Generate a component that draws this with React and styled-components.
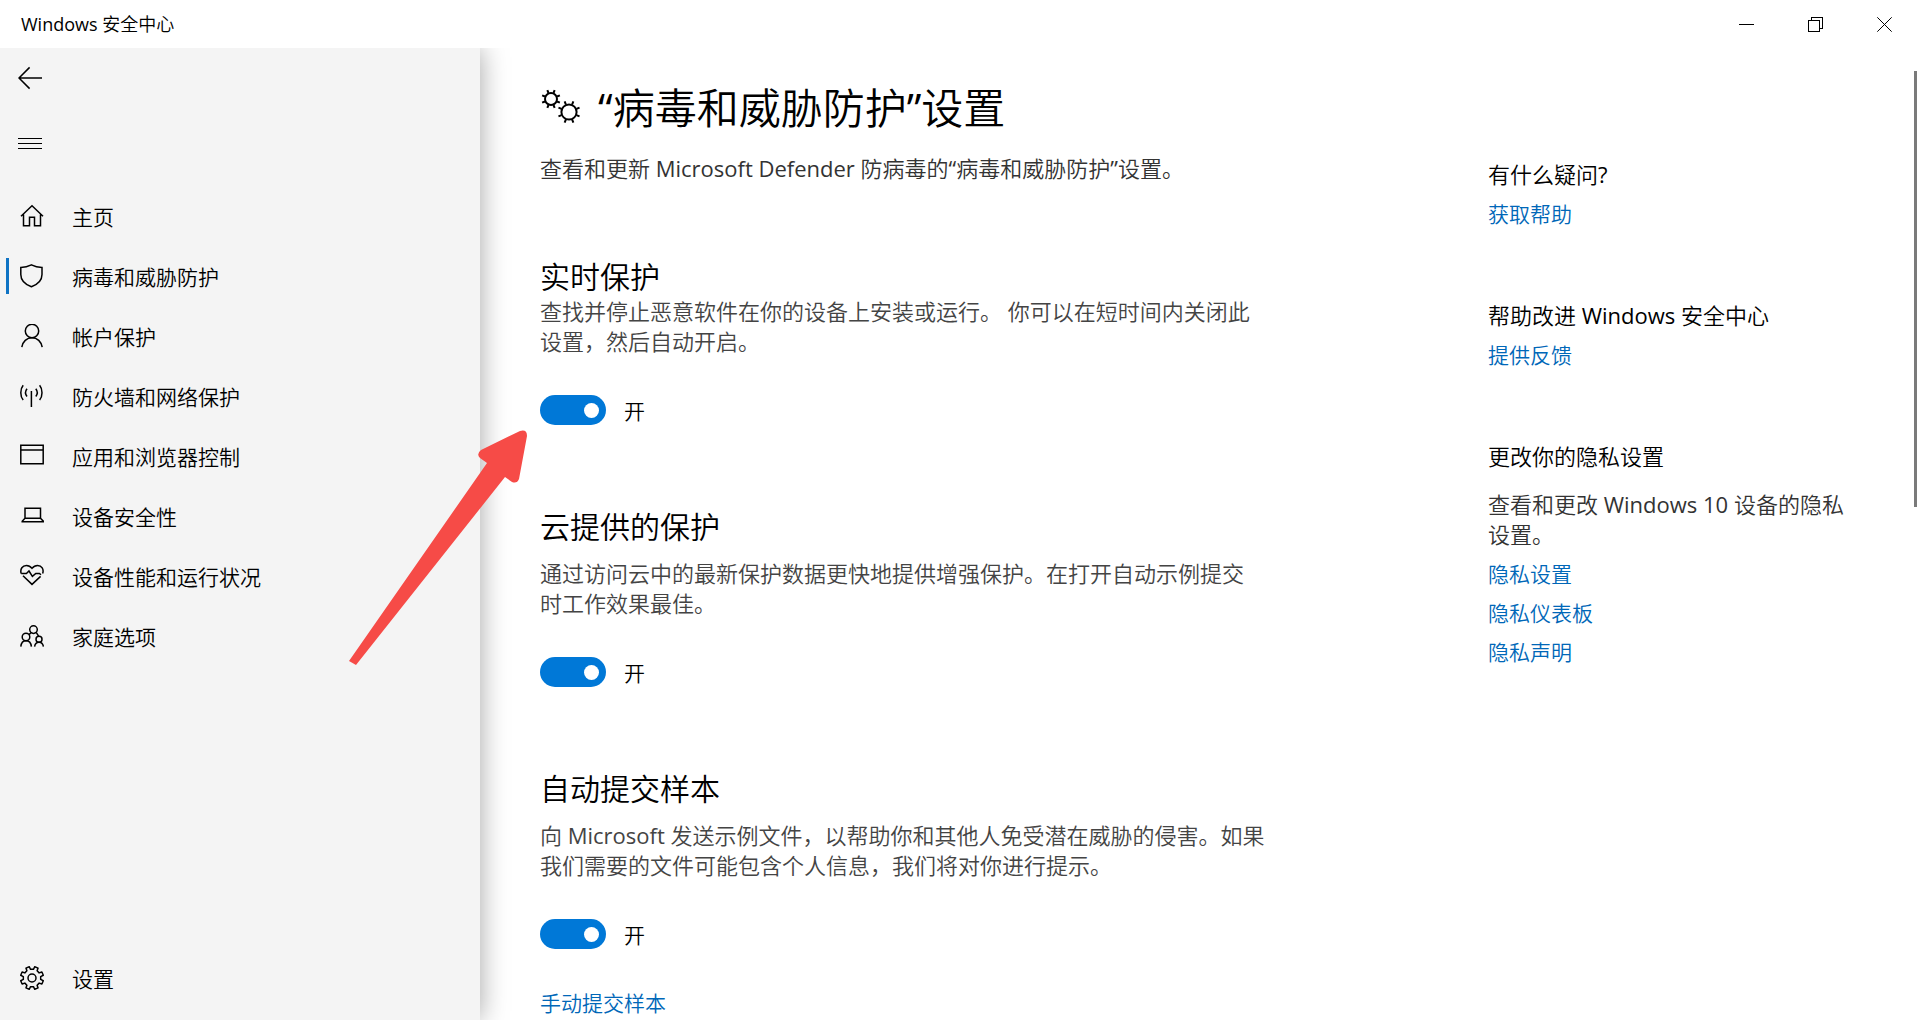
import React, { useState } from 'react';
import styled, { createGlobalStyle } from 'styled-components';

const GlobalStyle = createGlobalStyle`
  * {
    box-sizing: border-box;
  }

  body {
    margin: 0;
    background: #ffffff;
    color: #000000;
    font-family: 'Open Sans', 'Noto Sans CJK SC DemiLight', 'Noto Sans CJK SC', sans-serif;
    font-size: 21px;
    font-weight: 400;
  }

  h1, h2, h3, p {
    margin: 0;
    font-weight: inherit;
  }

  button {
    padding: 0;
    border: none;
    background: transparent;
    color: inherit;
    font: inherit;
    cursor: pointer;
  }
`;

const Window = styled.div`
  position: relative;
  display: flex;
  flex-direction: column;
  height: 100vh;
  overflow: hidden;
`;

const TitleBar = styled.header`
  position: relative;
  z-index: 2;
  display: flex;
  align-items: center;
  justify-content: space-between;
  flex: none;
  height: 48px;
  padding: 0 1px 0 21px;
  background: #ffffff;
`;

const WindowTitle = styled.span`
  padding-bottom: 2px;
  font-size: 18px;
`;

const WindowControls = styled.div`
  display: flex;
  height: 100%;
`;

const WindowButton = styled.button`
  display: flex;
  align-items: center;
  justify-content: center;
  width: 69px;
  height: 100%;

  &:hover {
    background: #e5e5e5;
  }
`;

const Body = styled.div`
  display: flex;
  flex: 1;
  min-height: 0;
`;

const Sidebar = styled.aside`
  z-index: 1;
  display: flex;
  flex-direction: column;
  flex: none;
  width: 480px;
  padding-bottom: 12px;
  background: #f4f4f4;
  box-shadow: 0 0 26px rgba(0, 0, 0, 0.36);
`;

const SidebarButton = styled.button`
  display: flex;
  align-items: center;
  width: 60px;
  height: 60px;
  padding-left: 18px;
`;

const SidebarTools = styled.div`
  display: flex;
  flex-direction: column;
  gap: 5px;
  padding-bottom: 13px;
`;

const Nav = styled.nav`
  display: flex;
  flex-direction: column;
  flex: 1;
`;

const NavItem = styled.a`
  position: relative;
  display: flex;
  align-items: center;
  gap: 28px;
  height: 60px;
  padding-left: 20px;
  color: #000000;
  text-decoration: none;

  &:last-child {
    margin-top: auto;
  }

  &:hover {
    background: #e6e6e6;
  }

  &::before {
    content: '';
    position: absolute;
    left: 6px;
    top: 12px;
    width: 3px;
    height: 36px;
    background: ${props => props.$active ? '#0f73c4' : 'transparent'};
  }
`;

const Main = styled.main`
  display: flex;
  flex: 1;
  gap: 208px;
  min-width: 0;
  padding: 0 40px 0 60px;
`;

const Content = styled.div`
  flex: 1;
  padding-top: 30px;
`;

const PageHeading = styled.div`
  display: flex;
  align-items: center;
  gap: 16px;
  height: 60px;
`;

const PageTitle = styled.h1`
  font-size: 42px;
  line-height: 60px;
`;

const Lead = styled.p`
  margin-top: 15px;
  color: #333333;
  font-size: 22px;
  line-height: 30px;
`;

const Section = styled.section`
  height: 262px;
`;

const Sections = styled.div`
  padding-top: 63px;
`;

const SectionTitle = styled.h2`
  height: 50px;
  padding-top: ${props => props.$tight ? '12px' : '0'};
  font-size: 30px;
  line-height: 38px;
`;

const SectionText = styled.p`
  max-width: 725px;
  color: #444444;
  font-size: 22px;
  line-height: 30px;
`;

const ToggleLabel = styled.label`
  display: flex;
  align-items: center;
  gap: 18px;
  width: max-content;
  height: 30px;
  margin-top: 39px;
  cursor: pointer;
`;

const Toggle = styled.input`
  appearance: none;
  display: flex;
  align-items: center;
  justify-content: flex-end;
  width: 66px;
  height: 30px;
  margin: 0;
  padding: 0 7px;
  border-radius: 15px;
  background: #0078d7;
  cursor: pointer;

  &::before {
    content: '';
    width: 15px;
    height: 15px;
    border-radius: 50%;
    background: #ffffff;
  }

  &:not(:checked) {
    justify-content: flex-start;
    background: #999999;
  }
`;

const TextLink = styled.a`
  display: block;
  color: #0067b8;
  line-height: 39px;
  text-decoration: none;

  &:hover {
    color: #666666;
  }
`;

const SectionLink = styled(TextLink)`
  margin-top: 35px;
`;

const Help = styled.div`
  display: flex;
  flex-direction: column;
  gap: 60px;
  flex: none;
  width: 392px;
  padding-top: 105px;
`;

const HelpTitle = styled.h3`
  font-size: 22px;
  line-height: 42px;
`;

const HelpText = styled.p`
  max-width: 366px;
  margin: 12px 0 6px;
  color: #333333;
  font-size: 22px;
  line-height: 30px;
`;

const Scrollbar = styled.div`
  position: absolute;
  top: 71px;
  right: 3px;
  width: 3px;
  height: 436px;
  background: #7a7a7a;
`;

const Pointer = styled.svg`
  position: absolute;
  top: 430px;
  left: 349px;
  z-index: 3;
  pointer-events: none;
`;

const Icon = ({ children, size = 24 }) => (
  <svg
    width={size}
    height={size}
    viewBox={`0 0 ${size} ${size}`}
    fill="none"
    stroke="currentColor"
    strokeWidth="1.5"
    aria-hidden="true"
  >
    {children}
  </svg>
);

// Closed outline of a cog with eight teeth
const cogPath = (cx, cy, outer, inner) => {
  const points = [];
  for (let i = 0; i < 8; i++) {
    const mid = 22.5 + i * 45;
    [[-13, inner], [-9, outer], [9, outer], [13, inner]].forEach(([offset, r]) => {
      const a = ((mid + offset) * Math.PI) / 180;
      points.push(`${(cx + r * Math.cos(a)).toFixed(2)} ${(cy + r * Math.sin(a)).toFixed(2)}`);
    });
  }
  return `M${points.join('L')}Z`;
};

// Short spokes around a ring
const spokesPath = (cx, cy, from, to) => {
  let d = '';
  for (let i = 0; i < 8; i++) {
    const a = ((22.5 + i * 45) * Math.PI) / 180;
    d += `M${cx + from * Math.cos(a)} ${cy + from * Math.sin(a)}L${cx + to * Math.cos(a)} ${cy + to * Math.sin(a)}`;
  }
  return d;
};

const icons = {
  home: <path d="M1 12.3 12 1.8 23 12.3M3.5 10.5V21.8H9.5V13.3H14.5V21.8H20.5V10.5" />,
  shield: <path d="M.8 3.4C4 3.4 8.5 2.4 11.4.9 14.3 2.4 18.8 3.4 22 3.4V10.5C22 16 18 20.3 11.4 22.8 4.8 20.3.8 16 .8 10.5Z" />,
  account: (
    <>
      <circle cx="12" cy="7" r="6.7" />
      <path d="M1.8 23.2C2.6 17.6 6.8 13.7 12 13.7S21.4 17.6 22.2 23.2" />
    </>
  ),
  network: (
    <path d="M11.4 7V23M3.2 1.2C0 5 0 12.3 3.2 16M7 4.8C5 7.4 5 10 7 12.5M19.6 1.2C22.8 5 22.8 12.3 19.6 16M15.8 4.8C17.8 7.4 17.8 10 15.8 12.5" />
  ),
  app: <path d="M.8 1.2H23.2V19.8H.8ZM.8 6H23.2" />,
  device: <path d="M5 4.2H20.5V14.2H5ZM5 14.2 2.2 17.2V17.8H23.3V17.2L20.5 14.2" />,
  health: (
    <>
      <path d="M1.2 9.6C-.2 5 2.6 1.4 6.4 1.4 8.8 1.4 10.6 2.6 12 4.4 13.4 2.6 15.2 1.4 17.6 1.4 21.6 1.4 24.2 5.2 22.6 9.6" />
      <path d="M1.2 9.6H6.4L9 7 12.4 12.4 15.8 9.4H19.4L21 10.8M3 11.8 12 20.4 20.6 12.4" />
    </>
  ),
  family: (
    <>
      <circle cx="13.5" cy="5.6" r="3.8" />
      <circle cx="6" cy="13" r="3.8" />
      <circle cx="19" cy="15.2" r="3" />
      <path d="M.8 22.6C1.2 19 3.2 16.8 6 16.8S11 19 11.4 22.6M14.6 22.6C15 20 16.6 18.2 19 18.2S23 20 23.4 22.6M9 10.6 11 8.8M16.2 8.4 18.6 12.2" />
    </>
  ),
  settings: (
    <>
      <path d={cogPath(12, 12, 11.6, 8.8)} strokeLinejoin="round" />
      <circle cx="12" cy="12" r="4" />
    </>
  )
};

const navItems = [
  { key: 'home', label: '主页' },
  { key: 'shield', label: '病毒和威胁防护' },
  { key: 'account', label: '帐户保护' },
  { key: 'network', label: '防火墙和网络保护' },
  { key: 'app', label: '应用和浏览器控制' },
  { key: 'device', label: '设备安全性' },
  { key: 'health', label: '设备性能和运行状况' },
  { key: 'family', label: '家庭选项' },
  { key: 'settings', label: '设置' }
];

const sections = [
  {
    key: 'realtime',
    title: '实时保护',
    text: '查找并停止恶意软件在你的设备上安装或运行。 你可以在短时间内关闭此设置，然后自动开启。'
  },
  {
    key: 'cloud',
    title: '云提供的保护',
    text: '通过访问云中的最新保护数据更快地提供增强保护。在打开自动示例提交时工作效果最佳。'
  },
  {
    key: 'samples',
    title: '自动提交样本',
    text: '向 Microsoft 发送示例文件，以帮助你和其他人免受潜在威胁的侵害。如果我们需要的文件可能包含个人信息，我们将对你进行提示。'
  }
];

const App = () => {
  const [selected, setSelected] = useState('shield');
  const [enabled, setEnabled] = useState({ realtime: true, cloud: true, samples: true });

  const toggle = (key) => setEnabled({ ...enabled, [key]: !enabled[key] });

  return (
    <Window lang="zh-CN">
      <GlobalStyle />
      <TitleBar>
        <WindowTitle>Windows 安全中心</WindowTitle>
        <WindowControls>
          <WindowButton aria-label="最小化">
            <svg width="15" height="15" stroke="#000000" shapeRendering="crispEdges">
              <path d="M0 7.5H15" />
            </svg>
          </WindowButton>
          <WindowButton aria-label="还原">
            <svg width="15" height="15" fill="none" stroke="#000000" shapeRendering="crispEdges">
              <path d="M.5 3.5H11.5V14.5H.5ZM3.5 3.5V.5H14.5V11.5H11.5" />
            </svg>
          </WindowButton>
          <WindowButton aria-label="关闭">
            <svg width="15" height="15" stroke="#000000">
              <path d="M.3.3 14.7 14.7M14.7.3.3 14.7" />
            </svg>
          </WindowButton>
        </WindowControls>
      </TitleBar>

      <Body>
        <Sidebar>
          <SidebarTools>
            <SidebarButton aria-label="返回">
              <Icon><path d="M24 12H1M11.6 1.4 1 12 11.6 22.6" /></Icon>
            </SidebarButton>
            <SidebarButton aria-label="打开导航">
              <svg width="24" height="24" stroke="#000000" shapeRendering="crispEdges">
                <path d="M0 7.5H24M0 12.5H24M0 17.5H24" />
              </svg>
            </SidebarButton>
          </SidebarTools>
          <Nav>
            {navItems.map(({ key, label }) => (
              <NavItem
                key={key}
                href={`#${key}`}
                $active={selected === key}
                onClick={() => setSelected(key)}
              >
                <Icon>{icons[key]}</Icon>
                {label}
              </NavItem>
            ))}
          </Nav>
        </Sidebar>

        <Main>
          <Content>
            <PageHeading>
              <svg width="42" height="42" fill="none" stroke="#000000" strokeWidth="2" aria-hidden="true">
                <circle cx="11" cy="12" r="6" />
                <path d={spokesPath(11, 12, 6.5, 9.6)} />
                <circle cx="29" cy="25" r="7.6" />
                <path d={spokesPath(29, 25, 8, 11.4)} />
              </svg>
              <PageTitle>“病毒和威胁防护”设置</PageTitle>
            </PageHeading>
            <Lead>查看和更新 Microsoft Defender 防病毒的“病毒和威胁防护”设置。</Lead>

            <Sections>
              {sections.map(({ key, title, text }, index) => (
                <Section key={key}>
                  <SectionTitle $tight={index === 0}>{title}</SectionTitle>
                  <SectionText>{text}</SectionText>
                  <ToggleLabel>
                    <Toggle
                      type="checkbox"
                      role="switch"
                      checked={enabled[key]}
                      onChange={() => toggle(key)}
                    />
                    {enabled[key] ? '开' : '关'}
                  </ToggleLabel>
                  {key === 'samples' && <SectionLink href="#submit">手动提交样本</SectionLink>}
                </Section>
              ))}
            </Sections>
          </Content>

          <Help>
            <div>
              <HelpTitle>有什么疑问?</HelpTitle>
              <TextLink href="#help">获取帮助</TextLink>
            </div>
            <div>
              <HelpTitle>帮助改进 Windows 安全中心</HelpTitle>
              <TextLink href="#feedback">提供反馈</TextLink>
            </div>
            <div>
              <HelpTitle>更改你的隐私设置</HelpTitle>
              <HelpText>查看和更改 Windows 10 设备的隐私设置。</HelpText>
              <TextLink href="#privacy-settings">隐私设置</TextLink>
              <TextLink href="#privacy-dashboard">隐私仪表板</TextLink>
              <TextLink href="#privacy-statement">隐私声明</TextLink>
            </div>
          </Help>
        </Main>
      </Body>

      <Scrollbar />
      <Pointer width="180" height="237" fill="#f64b47" aria-hidden="true">
        <path d="M0 231 138 33 131 28Q127 24 132 20L171 1Q178-1 178 6L170 49Q168 54 163 52L156 47 7 235Z" />
      </Pointer>
    </Window>
  );
};

export default App;
